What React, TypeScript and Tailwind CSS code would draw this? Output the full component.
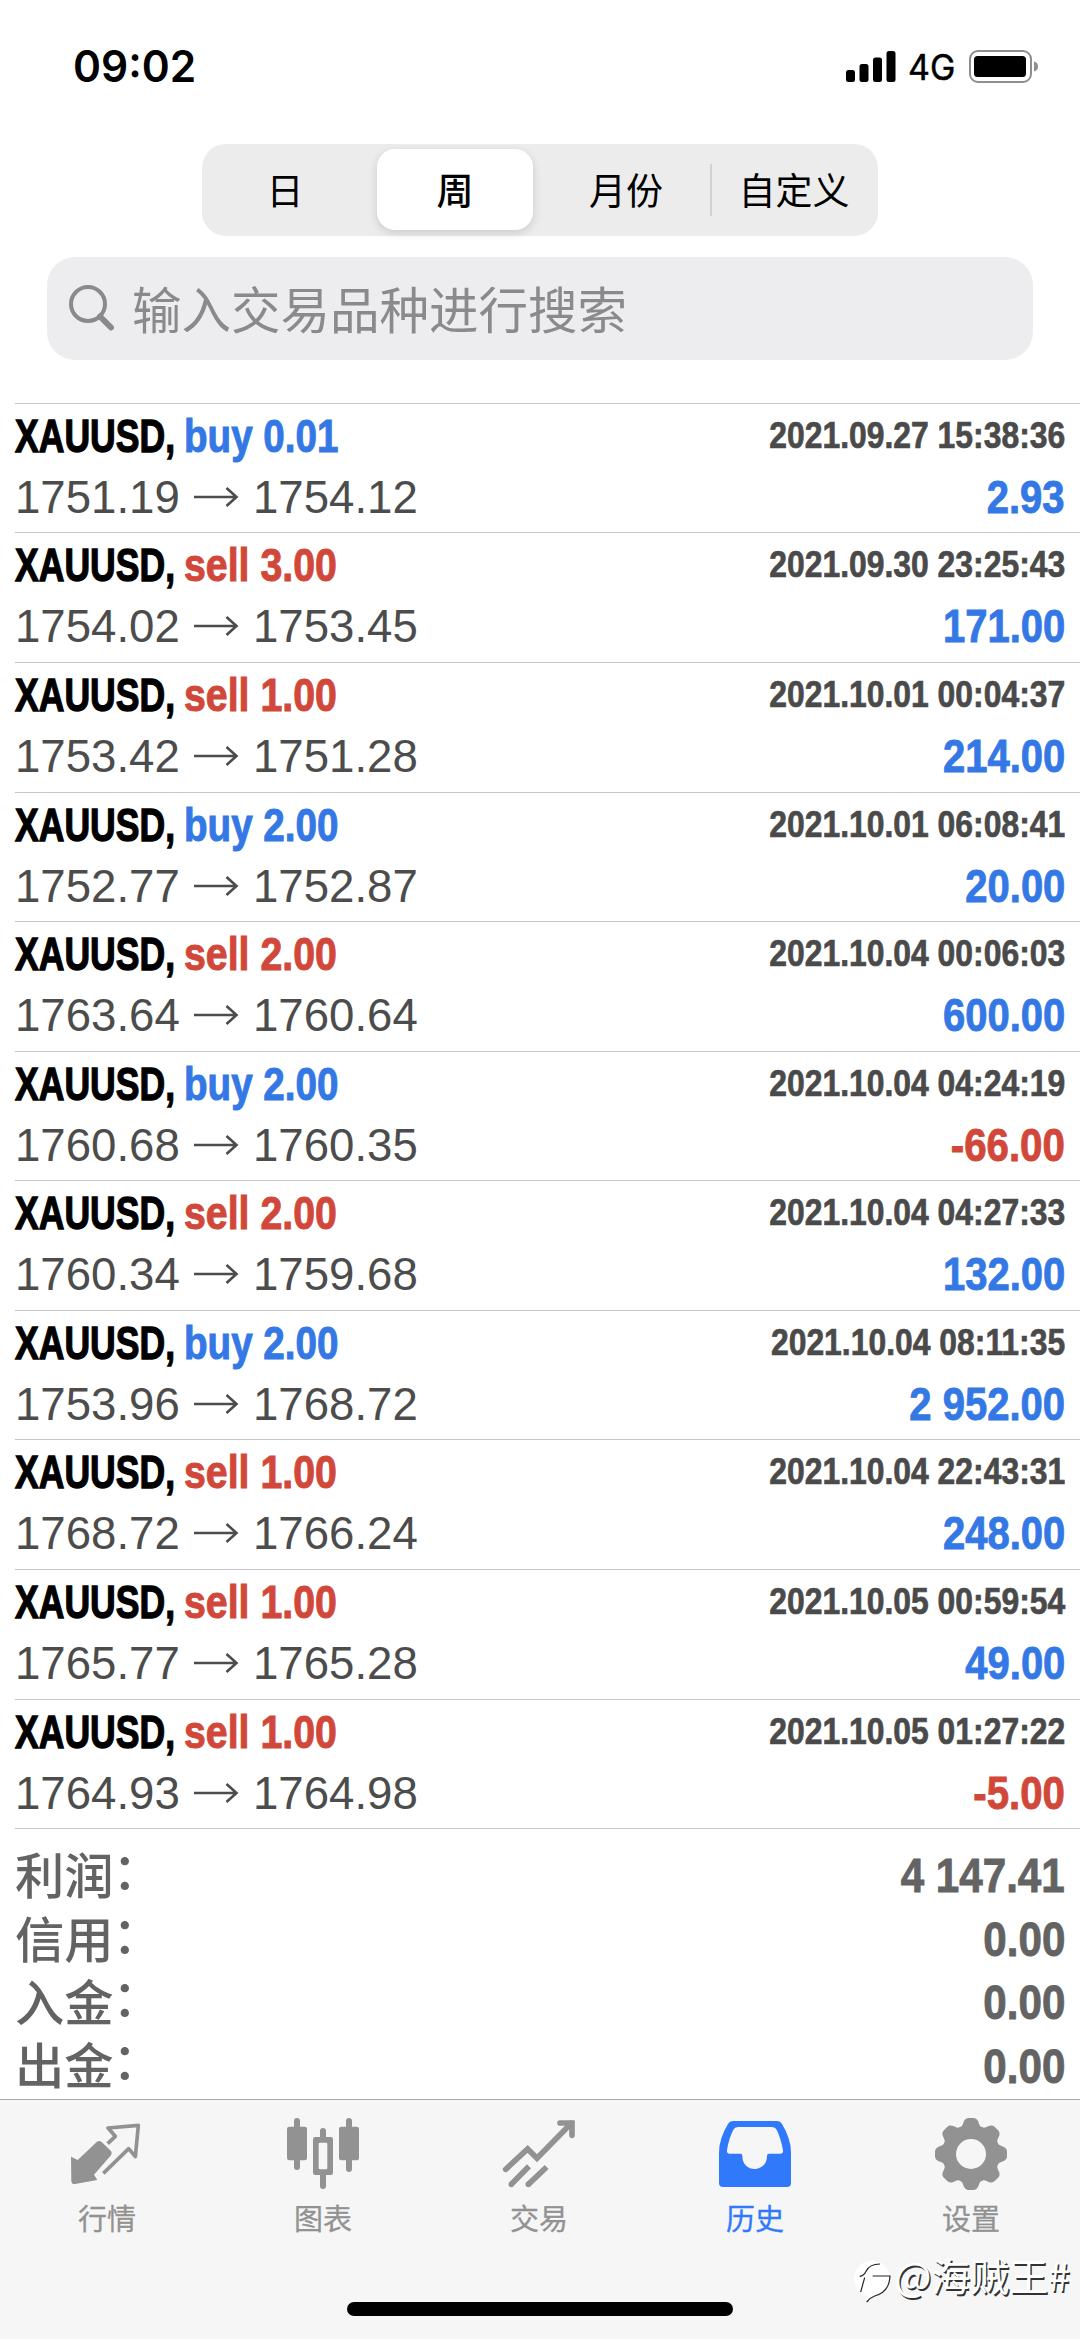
import React from "react";

type Deal = { side: "buy" | "sell"; lot: string; from: string; to: string; time: string; profit: string };

const deals: Deal[] = [
  { side: "buy", lot: "0.01", from: "1751.19", to: "1754.12", time: "2021.09.27 15:38:36", profit: "2.93" },
  { side: "sell", lot: "3.00", from: "1754.02", to: "1753.45", time: "2021.09.30 23:25:43", profit: "171.00" },
  { side: "sell", lot: "1.00", from: "1753.42", to: "1751.28", time: "2021.10.01 00:04:37", profit: "214.00" },
  { side: "buy", lot: "2.00", from: "1752.77", to: "1752.87", time: "2021.10.01 06:08:41", profit: "20.00" },
  { side: "sell", lot: "2.00", from: "1763.64", to: "1760.64", time: "2021.10.04 00:06:03", profit: "600.00" },
  { side: "buy", lot: "2.00", from: "1760.68", to: "1760.35", time: "2021.10.04 04:24:19", profit: "-66.00" },
  { side: "sell", lot: "2.00", from: "1760.34", to: "1759.68", time: "2021.10.04 04:27:33", profit: "132.00" },
  { side: "buy", lot: "2.00", from: "1753.96", to: "1768.72", time: "2021.10.04 08:11:35", profit: "2 952.00" },
  { side: "sell", lot: "1.00", from: "1768.72", to: "1766.24", time: "2021.10.04 22:43:31", profit: "248.00" },
  { side: "sell", lot: "1.00", from: "1765.77", to: "1765.28", time: "2021.10.05 00:59:54", profit: "49.00" },
  { side: "sell", lot: "1.00", from: "1764.93", to: "1764.98", time: "2021.10.05 01:27:22", profit: "-5.00" },
];

const totals = [
  { label: "利润", value: "4 147.41" },
  { label: "信用", value: "0.00" },
  { label: "入金", value: "0.00" },
  { label: "出金", value: "0.00" },
];

function StatusBar() {
  return (
    <div className="flex h-[144px] items-start justify-between pl-[73px] pr-[40px] pt-[44px] text-black">
      <div className="origin-left scale-x-[0.965] text-[44px] font-semibold leading-[44px] font-['Inter',sans-serif]">09:02</div>
      <div className="flex items-center pt-[5px]">
        <svg className="h-[33px] w-[50px]" viewBox="0 0 50 33">
          <rect x="0" y="20" width="9" height="12" rx="2.5" />
          <rect x="13.5" y="14" width="9" height="18" rx="2.5" />
          <rect x="27" y="7.5" width="9" height="24.5" rx="2.5" />
          <rect x="40.5" y="1" width="9" height="31" rx="2.5" />
        </svg>
        <span className="ml-[12px] w-[48px] origin-left scale-x-[0.97] whitespace-nowrap pt-[2px] text-[35px] leading-[33px] font-['Inter',sans-serif] [-webkit-text-stroke:0.5px_currentColor]">4G</span>
        <svg className="ml-[13px] h-[33px] w-[71px]" viewBox="0 0 71 33">
          <rect x="1" y="1" width="61" height="31" rx="8" fill="none" stroke="#8e8e8e" strokeWidth="2" />
          <rect x="5" y="6" width="52" height="21" rx="3.5" />
          <path d="M65 11.500Q69 12.500 69 16.500T65 21.500Z" fill="#8e8e8e" />
        </svg>
      </div>
    </div>
  );
}

function Segments() {
  return (
    <div className="mx-auto flex h-[92px] w-[676px] items-center rounded-[24px] bg-[#ececec] text-[37px] leading-none text-black">
      <div className="flex w-[166px] justify-center">日</div>
      <div className="flex w-[174px] justify-center">
        <div className="flex h-[81px] w-[156px] items-center justify-center rounded-[18px] bg-white font-medium shadow-[0_3px_10px_rgba(0,0,0,0.14)]">周</div>
      </div>
      <div className="flex w-[168px] justify-center">月份</div>
      <div className="h-[52px] w-[2px] bg-[#d0d0d3]" />
      <div className="flex w-[164px] justify-center">自定义</div>
    </div>
  );
}

function Search() {
  return (
    <div className="mx-[47px] mt-[21px] flex h-[103px] items-center rounded-[28px] bg-[#ededef] pl-[21px] text-[#8a8a8c]">
      <svg className="h-[48px] w-[48px]" viewBox="0 0 48 48" fill="none" stroke="currentColor">
        <circle cx="20" cy="20" r="17" strokeWidth="4" />
        <path d="M32 32.500L43 43.500" strokeWidth="6" strokeLinecap="round" />
      </svg>
      <span className="ml-[16px] pb-[2px] text-[49.5px] leading-none">输入交易品种进行搜索</span>
    </div>
  );
}

function DealRow({ deal }: { deal: Deal }) {
  const buy = deal.side === "buy";
  return (
    <div className="ml-[15px] h-[129.58px] border-t border-[#c6c6c8] pr-[15px] pt-[4px] font-['Liberation_Sans',sans-serif] text-[46.5px] leading-[56px]">
      <div className="flex justify-between whitespace-nowrap font-bold">
        <div className="flex">
          <span className="w-[169px] origin-left scale-x-[0.765] text-black [-webkit-text-stroke:1.3px_currentColor]">XAUUSD,</span>
          <span
            className={
              buy
                ? "origin-left scale-x-[0.83] text-[#3478e5] [-webkit-text-stroke:1px_currentColor]"
                : "origin-left scale-x-[0.845] text-[#d1483a] [-webkit-text-stroke:1px_currentColor]"
            }
          >
            {deal.side} {deal.lot}
          </span>
        </div>
        <span className="origin-right scale-x-[0.85] text-[37.5px] leading-[55px] text-[#4a4a4a] [-webkit-text-stroke:0.7px_currentColor]">{deal.time}</span>
      </div>
      <div className="mt-[5px] flex justify-between whitespace-nowrap">
        <div className="flex items-center text-[#4c4c4c]">
          <span className="w-[179px] origin-left scale-x-[0.98]">{deal.from}</span>
          <svg className="h-[22px] w-[45px]" viewBox="0 0 45 22" fill="none" stroke="currentColor" strokeWidth="2.600">
            <path d="M0 11H42M32.500 2L42.500 11L32.500 20" />
          </svg>
          <span className="ml-[14px] origin-left scale-x-[0.98]">{deal.to}</span>
        </div>
        <span
          className={
            deal.profit.startsWith("-")
              ? "origin-right scale-x-[0.865] font-bold text-[#d1483a] [-webkit-text-stroke:0.9px_currentColor]"
              : "origin-right scale-x-[0.86] font-bold text-[#3478e5] [-webkit-text-stroke:0.9px_currentColor]"
          }
        >
          {deal.profit}
        </span>
      </div>
    </div>
  );
}

function Totals() {
  return (
    <div className="ml-[15px] h-[271px] border-t border-[#c6c6c8] pr-[15px] pt-[15px] text-[#636363]">
      {totals.map((t) => (
        <div key={t.label} className="flex h-[63.4px] items-center justify-between whitespace-nowrap">
          <div className="flex pb-[6px] text-[49.3px] font-medium leading-none">
            <span>{t.label}</span>
            <span className="-ml-px -mt-[5px]">：</span>
          </div>
          <span className="origin-right scale-x-[0.86] font-['Liberation_Sans',sans-serif] text-[49px] font-bold leading-[63px] [-webkit-text-stroke:0.9px_currentColor]">{t.value}</span>
        </div>
      ))}
    </div>
  );
}

function QuotesIcon() {
  return (
    <svg className="h-[80px] w-[216px]" viewBox="3 66 648 240" fill="none" stroke="currentColor">
      <path d="M216 200L236 210L294 155Q301 150 308 156L336 183Q341 190 336 196L285 254L295 270L228 282Q217 283 217 272Z" fill="currentColor" stroke="none" />
      <path d="M326 161L349 139L327 114L418 106L409 200L389 176L313 250" strokeWidth="11" strokeLinejoin="round" />
    </svg>
  );
}

function ChartIcon() {
  return (
    <svg className="h-[80px] w-[216px]" viewBox="648 66 648 240" fill="currentColor">
      <rect x="882" y="84" width="18" height="156" rx="9" />
      <rect x="861" y="110" width="60" height="101" rx="7" />
      <rect x="960" y="114" width="18" height="183" rx="9" />
      <rect x="939" y="141" width="60" height="114" rx="7" />
      <rect x="956" y="158" width="26" height="80" rx="4" fill="#f6f6f6" />
      <rect x="1038" y="84" width="18" height="162" rx="9" />
      <rect x="1017" y="110" width="60" height="101" rx="7" />
    </svg>
  );
}

function TradeIcon() {
  return (
    <svg className="h-[80px] w-[216px]" viewBox="96 66 648 240" fill="none" stroke="currentColor" strokeWidth="17">
      <path d="M317 238L383 177L411 205L514 100" strokeLinecap="round" />
      <path d="M480 99H516V136" strokeLinecap="round" />
      <path d="M387 229L334 283M440 231L385 283" />
      <circle cx="334" cy="283" r="8.500" fill="currentColor" stroke="none" />
      <circle cx="385" cy="283" r="8.500" fill="currentColor" stroke="none" />
    </svg>
  );
}

function HistoryIcon() {
  return (
    <svg className="h-[80px] w-[216px]" viewBox="744 66 648 240" fill="currentColor">
      <path
        fillRule="evenodd"
        d="M1000 93H1130Q1141 93 1146 102Q1173 146 1173 188V279Q1173 291 1161 291H969Q957 291 957 279V188Q957 146 984 102Q989 93 1000 93ZM1014 111Q1004 111 1000 119Q986 146 981 181Q980 191 989 191H1022Q1027 191 1027 198C1027 250 1101 250 1101 198Q1101 191 1107 191H1141Q1150 191 1149 181Q1143 146 1130 119Q1126 111 1116 111Z"
      />
    </svg>
  );
}

function SettingsIcon() {
  return (
    <svg className="h-[80px] w-[216px]" viewBox="252 66 648 240" fill="currentColor">
      <circle cx="573" cy="192" r="66" fill="none" stroke="currentColor" strokeWidth="42" />
      {[0, 45, 90, 135, 180, 225, 270, 315].map((a) => (
        <path key={a} d="M538 116Q547 110 551 95Q556 84 566 84H580Q590 84 595 95Q599 110 608 116Z" transform={`rotate(${a} 573 192)`} />
      ))}
    </svg>
  );
}

const tabs = [
  { label: "行情", icon: <QuotesIcon /> },
  { label: "图表", icon: <ChartIcon /> },
  { label: "交易", icon: <TradeIcon /> },
  { label: "历史", icon: <HistoryIcon />, active: true },
  { label: "设置", icon: <SettingsIcon /> },
];

function Watermark() {
  return (
    <div className="absolute right-[10px] top-[152px] flex items-start text-white">
      <svg className="mt-[6px] h-[44px] w-[40px] overflow-visible" viewBox="18 38 120 132">
        <path d="M72 46A54 54 0 0 1 126 94Q124 140 80 152Q68 156 56 170L58 152A54 54 0 0 1 72 46Z" fill="#fff" />
        <path d="M38 140L50 97M35 93Q48 92 54 78Q64 56 96 56M74 92H126Q124 140 80 152Q68 156 56 170" fill="none" stroke="#222" strokeWidth="3.500" />
      </svg>
      <span className="whitespace-nowrap text-[39px] leading-[44px] [text-shadow:1.5px_1.5px_0.5px_#333]">@海贼王#</span>
    </div>
  );
}

function TabBar() {
  return (
    <div className="relative h-[240px] border-t border-[#a9a9ab] bg-[#f6f6f6]">
      <div className="flex pt-[12px]">
        {tabs.map((t) => (
          <div key={t.label} className={t.active ? "flex w-[216px] flex-col items-center text-[#3079fb]" : "flex w-[216px] flex-col items-center text-[#929292]"}>
            {t.icon}
            <span className="mr-[2px] mt-[10px] text-[29px] leading-[30px] [-webkit-text-stroke:0.3px_currentColor]">{t.label}</span>
          </div>
        ))}
      </div>
      <div className="mx-auto mt-[70px] h-[14px] w-[386px] rounded-full bg-black" />
      <Watermark />
    </div>
  );
}

export default function App() {
  return (
    <div className="flex h-[2339px] w-[1080px] flex-col overflow-hidden bg-white font-['Noto_Sans_CJK_SC',sans-serif]">
      <StatusBar />
      <Segments />
      <Search />
      <div className="mt-[43px]">
        {deals.map((d) => (
          <DealRow key={d.time} deal={d} />
        ))}
        <Totals />
      </div>
      <TabBar />
    </div>
  );
}
